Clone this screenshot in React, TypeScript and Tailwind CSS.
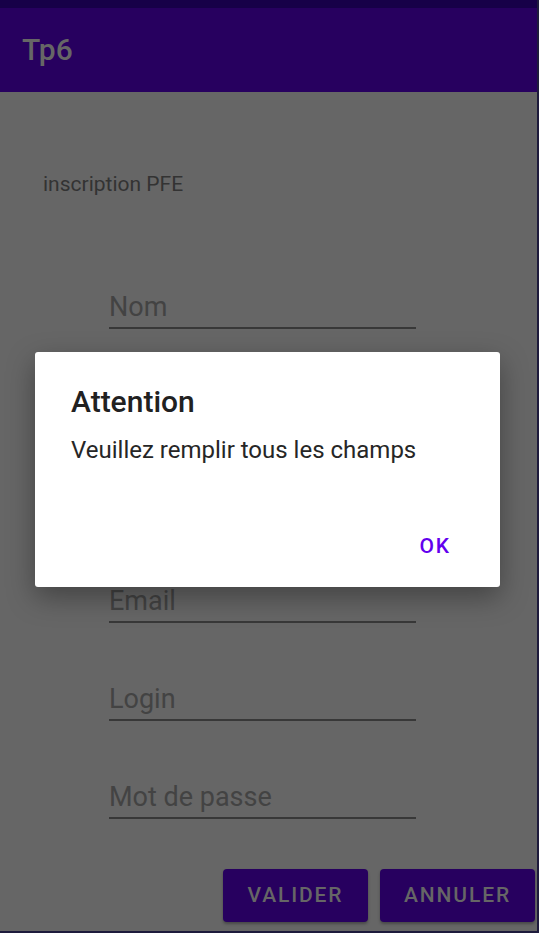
import React from "react";

const fields = ["Nom", "", "", "Email", "Login", "Mot de passe"];

export default function App() {
  return (
    <div
      className="relative w-[539px] h-[933px] overflow-hidden bg-[#666666] border-r-2 border-b-2 border-[#1e1b3c]"
      style={{ fontFamily: "Roboto, 'Noto Sans', sans-serif" }}
    >
      {/* status bar */}
      <div className="h-[8px] bg-[#170048]" />
      {/* app bar */}
      <div className="h-[84px] bg-[#27005f] flex items-center pl-[22px]">
        <span className="text-[30px] leading-[36px] font-medium text-[#666666]">Tp6</span>
      </div>

      {/* content */}
      <div className="flex flex-col">
        <div className="mt-[80px] pl-[43px] text-[21px] leading-[24px] text-[#333333]">
          inscription PFE
        </div>
        <div className="mt-[95px] flex flex-col gap-[60px] pl-[109px]">
          {fields.map((f, i) => (
            <div key={i} className="w-[307px] border-b-2 border-[#383838] pb-[4px]">
              <div className="h-[32px] text-[27px] leading-[32px] text-[#434343]">{f}</div>
            </div>
          ))}
        </div>
        <div className="mt-[50px] flex justify-end gap-[12px] pr-[2px]">
          <div className="h-[53px] w-[145px] flex items-center justify-center rounded-[4px] bg-[#27005f] shadow-[0_2px_3px_rgba(0,0,0,0.3)] text-[21px] font-medium tracking-[1.875px] text-[#666666]">
            VALIDER
          </div>
          <div className="h-[53px] w-[155px] flex items-center justify-center rounded-[4px] bg-[#27005f] shadow-[0_2px_3px_rgba(0,0,0,0.3)] text-[21px] font-medium tracking-[1.875px] text-[#666666]">
            ANNULER
          </div>
        </div>
      </div>

      {/* dialog */}
      <div className="absolute left-[35px] top-[352px] w-[465px] h-[235px] bg-white rounded-[3px] shadow-[0_10px_28px_rgba(0,0,0,0.35)] flex flex-col">
        <div className="pt-[32px] pl-[36px] text-[30px] leading-[36px] font-medium text-[#212121]">
          Attention
        </div>
        <div className="mt-[16px] pl-[36px] text-[24px] leading-[28px] text-[#262626]">
          Veuillez remplir tous les champs
        </div>
        <div className="mt-[70px] flex justify-end pr-[49px]">
          <span className="text-[21px] leading-[24px] font-medium tracking-[1.875px] text-[#6200ee]">OK</span>
        </div>
      </div>
    </div>
  );
}
